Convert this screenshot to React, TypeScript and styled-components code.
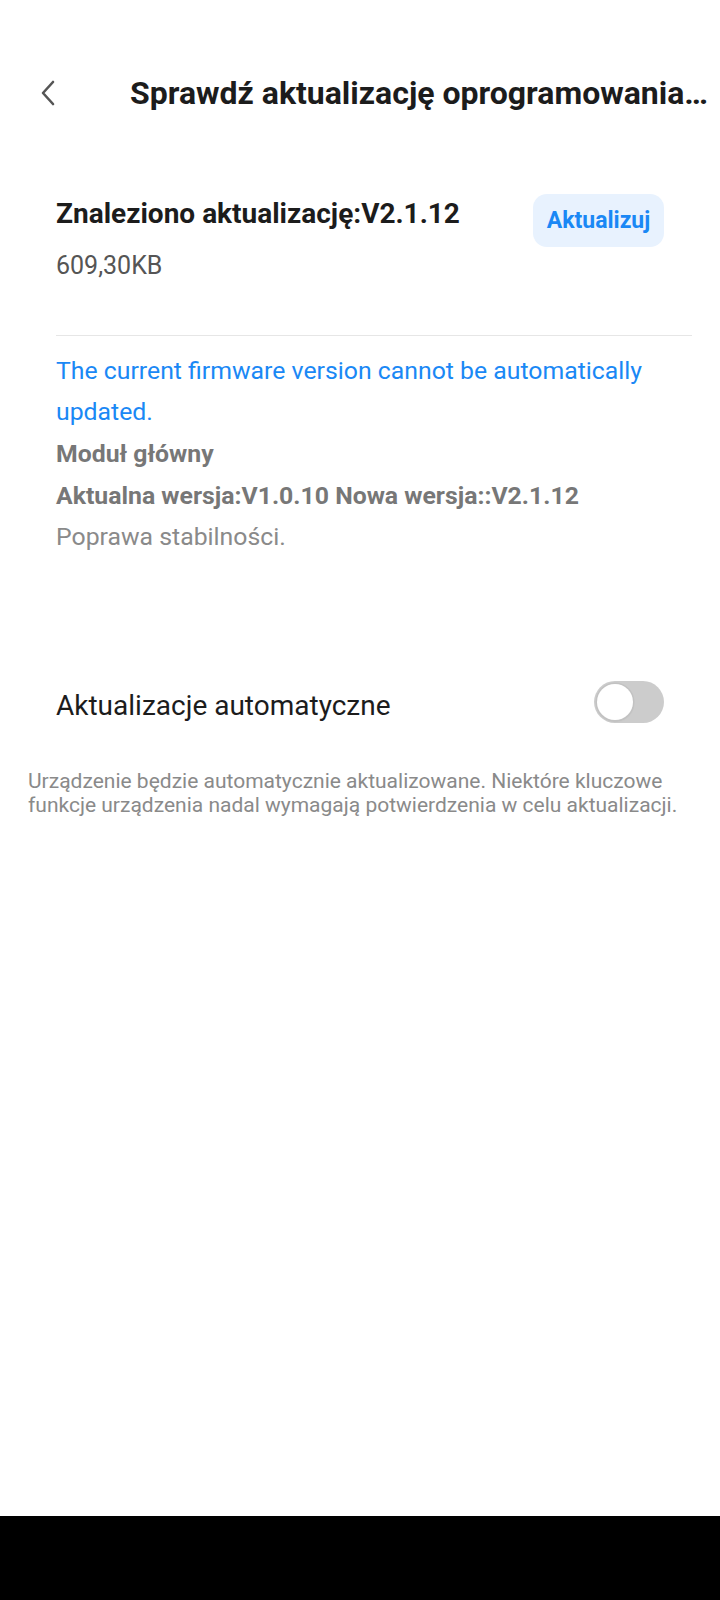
import React from "react";
import styled, { createGlobalStyle } from "styled-components";

const Global = createGlobalStyle`
  html, body { margin: 0; padding: 0; background: #ffffff; }
  body { font-family: Roboto, "Noto Sans", Arial, sans-serif; -webkit-font-smoothing: antialiased; }
  * { box-sizing: border-box; }
`;

const Page = styled.div`
  width: 720px;
  height: 1600px;
  display: flex;
  flex-direction: column;
  background: #ffffff;
`;

const Main = styled.div`
  flex: 1;
  display: flex;
  flex-direction: column;
`;

const Header = styled.header`
  display: flex;
  align-items: center;
  height: 66px;
  margin-top: 60px;
  padding-left: 36px;
`;

const BackButton = styled.button`
  width: 24px;
  height: 30px;
  padding: 0;
  border: none;
  background: none;
  display: flex;
  align-items: center;
  justify-content: center;
  color: #555555;
`;

const Title = styled.h1`
  margin: 0 0 0 70px;
  flex: 1;
  min-width: 0;
  font-size: 32px;
  font-weight: 700;
  color: #1c1c1c;
  white-space: nowrap;
  overflow: hidden;
  text-overflow: ellipsis;
`;

const UpdateSection = styled.section`
  display: flex;
  flex-direction: column;
  padding: 70px 28px 0 56px;
`;

const UpdateRow = styled.div`
  display: flex;
  align-items: flex-start;
  justify-content: space-between;
  padding-right: 28px;
`;

const UpdateInfo = styled.div`
  display: flex;
  flex-direction: column;
`;

const FoundTitle = styled.div`
  font-size: 28px;
  font-weight: 700;
  color: #1c1c1c;
  line-height: 36px;
`;

const SizeText = styled.div`
  font-size: 25px;
  color: #555555;
  line-height: 32px;
  margin-top: 18px;
`;

const UpdateButton = styled.button`
  width: 131px;
  height: 53px;
  border: none;
  border-radius: 14px;
  background: #e8f2fe;
  color: #1a88f5;
  font-family: Roboto, sans-serif;
  font-size: 23px;
  font-weight: 700;
  margin-top: -2px;
  padding: 0;
`;

const Divider = styled.hr`
  border: none;
  height: 1px;
  background: #e6e6e6;
  margin: 53px 0 0 0;
`;

const Notes = styled.div`
  display: flex;
  flex-direction: column;
  padding-top: 14px;
  padding-right: 28px;
`;

const Notice = styled.p<{ $tone: "blue" | "strong" | "muted" }>`
  margin: ${(p) => (p.$tone === "strong" ? "1px 0 0 0" : "0")};
  font-size: 24.8px;
  line-height: 41px;
  color: ${(p) =>
    p.$tone === "blue" ? "#1a88f5" : p.$tone === "strong" ? "#777777" : "#8a8a8a"};
  font-weight: ${(p) => (p.$tone === "strong" ? 700 : 400)};
`;

const AutoRow = styled.div`
  display: flex;
  align-items: center;
  justify-content: space-between;
  padding: 0 56px;
  margin-top: 120px;
  height: 56px;
`;

const AutoLabel = styled.span`
  font-size: 28px;
  color: #1c1c1c;
`;

const Toggle = styled.div<{ $on: boolean }>`
  width: 70px;
  height: 42px;
  margin-bottom: 6px;
  border-radius: 21px;
  background: ${(p) => (p.$on ? "#1a88f5" : "#cccccc")};
  display: flex;
  align-items: center;
  padding: 0 3px;
  justify-content: ${(p) => (p.$on ? "flex-end" : "flex-start")};
`;

const Knob = styled.div`
  width: 36px;
  height: 36px;
  border-radius: 50%;
  background: #ffffff;
  box-shadow: 0 0 0 1.5px #c2c2c2, 0 1px 2px rgba(0, 0, 0, 0.15);
`;

const Description = styled.p`
  margin: 36px 0 0 0;
  padding: 0 28px;
  font-size: 21px;
  line-height: 24px;
  color: #8a8a8a;
`;

const NavBar = styled.div`
  height: 84px;
  background: #000000;
`;

export default function App() {
  return (
    <>
      <Global />
      <Page>
        <Main>
          <Header>
            <BackButton aria-label="Back">
              <svg width="20" height="26" viewBox="0 0 20 26" fill="none">
                <path d="M15 2 L5 13 L15 24" stroke="#555555" strokeWidth="2.6" strokeLinecap="round" strokeLinejoin="round" />
              </svg>
            </BackButton>
            <Title>Sprawdź aktualizację oprogramowania…</Title>
          </Header>

          <UpdateSection>
            <UpdateRow>
              <UpdateInfo>
                <FoundTitle>Znaleziono aktualizację:V2.1.12</FoundTitle>
                <SizeText>609,30KB</SizeText>
              </UpdateInfo>
              <UpdateButton>Aktualizuj</UpdateButton>
            </UpdateRow>
            <Divider />
            <Notes>
              <Notice $tone="blue">The current firmware version cannot be automatically updated.</Notice>
              <Notice $tone="strong">Moduł główny</Notice>
              <Notice $tone="strong">Aktualna wersja:V1.0.10 Nowa wersja::V2.1.12</Notice>
              <Notice $tone="muted">Poprawa stabilności.</Notice>
            </Notes>
          </UpdateSection>

          <AutoRow>
            <AutoLabel>Aktualizacje automatyczne</AutoLabel>
            <Toggle $on={false}>
              <Knob />
            </Toggle>
          </AutoRow>

          <Description>
            Urządzenie będzie automatycznie aktualizowane. Niektóre kluczowe funkcje urządzenia nadal wymagają potwierdzenia w celu aktualizacji.
          </Description>
        </Main>
        <NavBar />
      </Page>
    </>
  );
}
